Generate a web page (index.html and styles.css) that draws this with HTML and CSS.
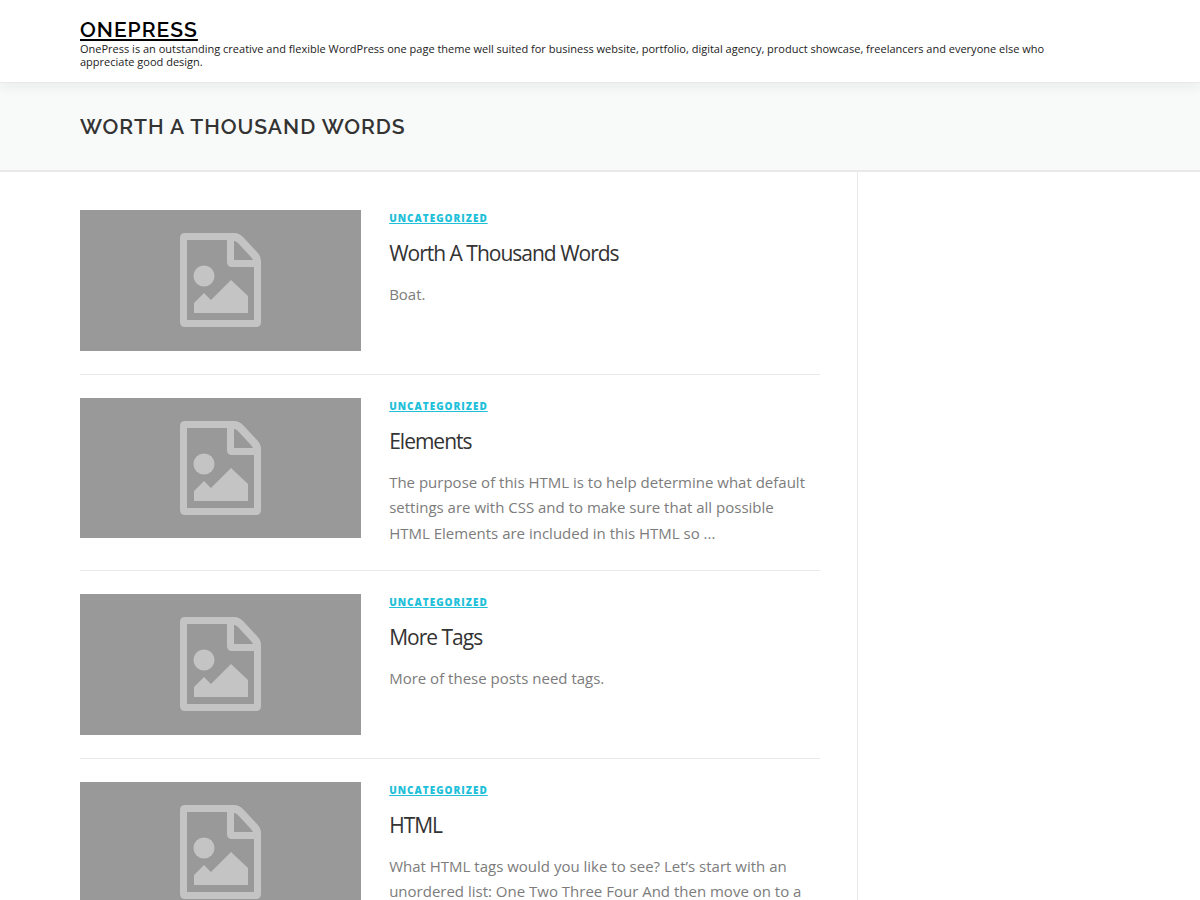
FILE: index.html
```html
<!DOCTYPE html>
<html lang="en">
<head>
    <meta charset="UTF-8">
    <meta name="viewport" content="width=device-width, initial-scale=1.0">
    <title>Worth A Thousand Words - OnePress</title>
    <link rel="stylesheet" href="styles.css">
</head>
<body>
    <svg width="0" height="0" class="sprite" aria-hidden="true">
        <symbol id="placeholder" viewBox="0 0 82 94">
            <path fill-rule="evenodd" d="M5 0H54Q59 0 63 4L77 19Q81 23 81 28V89Q81 94 76 94H5Q0 94 0 89V5Q0 0 5 0ZM7 7V87H74V34H52Q47 34 47 29V7ZM54 8V27H73Q72 25 70 23L58 10Q56 8 54 8Z"/>
            <circle cx="24" cy="43" r="10.5"/>
            <path d="M14 80V70L24 60L31 67L51 47L68 63V80Z"/>
        </symbol>
    </svg>

    <header class="site-header">
        <div class="container">
            <p class="site-title"><a href="#">ONEPRESS</a></p>
            <p class="site-description">OnePress is an outstanding creative and flexible WordPress one page theme well suited for business website, portfolio, digital agency, product showcase, freelancers and everyone else who appreciate good design.</p>
        </div>
    </header>

    <div class="page-header">
        <div class="container">
            <h1 class="page-title">WORTH A THOUSAND WORDS</h1>
        </div>
    </div>

    <div class="container content-inside">
        <main class="site-main">
            <article class="post">
                <a href="#" class="thumb" aria-label="Worth A Thousand Words"><svg><use href="#placeholder"/></svg></a>
                <div class="post-content">
                    <a href="#" class="category">UNCATEGORIZED</a>
                    <h2 class="entry-title"><a href="#">Worth A Thousand Words</a></h2>
                    <p class="excerpt">Boat.</p>
                </div>
            </article>
            <article class="post">
                <a href="#" class="thumb" aria-label="Elements"><svg><use href="#placeholder"/></svg></a>
                <div class="post-content">
                    <a href="#" class="category">UNCATEGORIZED</a>
                    <h2 class="entry-title"><a href="#">Elements</a></h2>
                    <p class="excerpt">The purpose of this HTML is to help determine what default settings are with CSS and to make sure that all possible HTML Elements are included in this HTML so ...</p>
                </div>
            </article>
            <article class="post">
                <a href="#" class="thumb" aria-label="More Tags"><svg><use href="#placeholder"/></svg></a>
                <div class="post-content">
                    <a href="#" class="category">UNCATEGORIZED</a>
                    <h2 class="entry-title"><a href="#">More Tags</a></h2>
                    <p class="excerpt">More of these posts need tags.</p>
                </div>
            </article>
            <article class="post">
                <a href="#" class="thumb" aria-label="HTML"><svg><use href="#placeholder"/></svg></a>
                <div class="post-content">
                    <a href="#" class="category">UNCATEGORIZED</a>
                    <h2 class="entry-title"><a href="#">HTML</a></h2>
                    <p class="excerpt">What HTML tags would you like to see? Let’s start with an unordered list: One Two Three Four And then move on to a</p>
                </div>
            </article>
        </main>
        <aside class="sidebar"></aside>
    </div>
</body>
</html>
```

FILE: styles.css
```css
* {
    box-sizing: border-box;
}
body {
    margin: 0;
    font-family: "Open Sans", Arial, sans-serif;
    font-size: 15px;
    line-height: 1.7;
    color: #7c7c7c;
    background: #ffffff;
}
h1, h2, p {
    margin: 0;
}
.sprite {
    position: absolute;
}
.container {
    max-width: 1120px;
    margin: 0 auto;
    padding: 0 40px;
}
.site-header {
    position: relative;
    padding: 18px 0 14px;
    background: #ffffff;
    border-bottom: 1px solid #e9e9e9;
    box-shadow: 0 5px 10px 0 rgba(50, 50, 50, 0.06);
}
.site-title {
    font-family: Raleway, Lato, sans-serif;
    font-size: 21px;
    line-height: 24px;
    font-weight: 600;
    letter-spacing: 1px;
}
.site-title a {
    color: #000000;
}
.site-description {
    max-width: 1000px;
    font-size: 11px;
    line-height: 13px;
    color: #222222;
}
.page-header {
    padding: 30px 0;
    background: #f8f9f9;
    border-bottom: 2px solid #e9e9e9;
}
.page-title {
    font-family: Raleway, Lato, sans-serif;
    font-size: 21px;
    line-height: 27px;
    font-weight: 600;
    letter-spacing: 1px;
    color: #333333;
}
.content-inside {
    display: flex;
}
.site-main {
    flex: 0 0 74.8%;
    padding: 15px 37px 0 0;
    border-right: 1px solid #e9e9e9;
}
.sidebar {
    flex: 1;
}
.post {
    display: flex;
    gap: 28px;
    padding: 23px 0;
    border-bottom: 1px solid #e9e9e9;
}
.thumb {
    display: flex;
    flex: 0 0 38%;
    align-items: center;
    justify-content: center;
    align-self: flex-start;
    aspect-ratio: 2 / 1;
    background: #999999;
}
.thumb svg {
    width: 82px;
    height: 94px;
    fill: #c4c4c4;
}
.post-content {
    flex: 1;
    padding: 0 6px 1px 0;
}
.category {
    display: block;
    width: fit-content;
    font-size: 10px;
    line-height: 17px;
    font-weight: 800;
    letter-spacing: 1px;
    color: #21bfd9;
}
.entry-title {
    margin: 12px 0 15px;
    font-size: 21px;
    line-height: 28px;
    font-weight: 400;
    letter-spacing: -1px;
}
.entry-title a {
    color: #333333;
    text-decoration: none;
}
```
